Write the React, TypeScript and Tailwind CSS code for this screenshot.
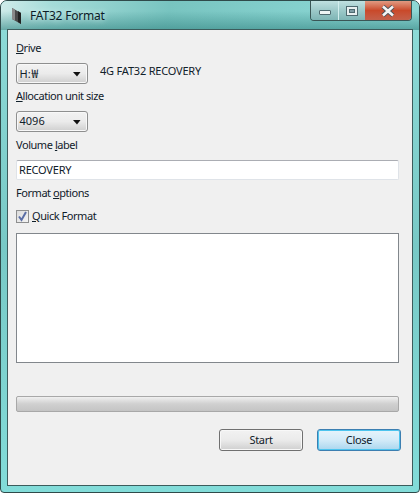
import React from "react";

function Combo({ children }: { children: React.ReactNode }) {
  return (
    <div className="w-[72px] h-[21px] rounded-[3px] border border-[#8e8f8f] bg-gradient-to-b from-[#f2f2f2] via-[#ebebeb] to-[#cfcfcf] flex items-center pl-[2.5px] pr-[5px] justify-between shadow-[inset_0_0_0_1px_#f8f8f8]">
      <span>{children}</span>
      <svg width="9" height="5" viewBox="0 0 9 5" className="mt-[1px]"><path d="M0 0h7.5L4 4.5z" fill="#111" /></svg>
    </div>
  );
}

function Label({ children, h }: { children: React.ReactNode; h: string }) {
  return <div className={`${h} flex items-center tracking-[-0.45px]`}>{children}</div>;
}

export default function App() {
  return (
    <div className="relative w-[420px] h-[493px] overflow-hidden rounded-t-[7px] rounded-b-[4px] border border-[#2f4a4a] bg-gradient-to-b from-[#8fdcd9] via-[#78c9c6] to-[#82dcd9] text-[11px] text-[#10202a] font-['Noto_Sans','Noto_Sans_CJK_KR',sans-serif] px-[6px] pb-[6px] flex flex-col">
      <div className="absolute inset-x-0 top-0 h-[29px] bg-[linear-gradient(100deg,#d0ecea_0%,#a5dcd9_12%,#78c4c0_40%,#84d0cd_70%,#8fd8d5_100%)]" />
      <div className="absolute inset-x-0 top-[10px] h-[19px] bg-gradient-to-b from-transparent to-[#3f8f8c]/70" />
      <div className="relative h-[28px] shrink-0 flex items-start">
        <svg width="12" height="18" viewBox="0 0 12 18" className="ml-[4px] mt-[6px]">
          <path d="M1 1l9 5v11L1 12z" fill="#4a4a4a" />
          <path d="M1 1l3 1.5v11L1 12z" fill="#8a8a8a" />
          <path d="M7 4l3 2v11l-3-2z" fill="#222" />
        </svg>
        <span className="ml-[7px] mt-[6px] text-[12px] leading-[18px] tracking-[-0.2px] text-[#0c1c28] [text-shadow:0_0_6px_#e8fbfa]">FAT32 Format</span>
      </div>

      <div className="absolute right-[7px] top-0 h-[20px] flex rounded-b-[4px] border border-t-0 border-[#3a5656] overflow-hidden">
        <div className="w-[28px] border-r border-[#d2eeee] bg-gradient-to-b from-[#bfe0e0] via-[#9cc9c9] to-[#7eb5b5] flex items-center justify-center">
          <div className="w-[12px] h-[5px] mt-[4px] rounded-[1px] bg-[#eef5f5] border border-[#4e6a70]" />
        </div>
        <div className="w-[26px] bg-gradient-to-b from-[#bfe0e0] via-[#9cc9c9] to-[#7eb5b5] flex items-center justify-center">
          <div className="w-[12px] h-[10px] border border-[#4e6a70] bg-[#e8f0f0] p-[2px]"><div className="w-full h-full bg-[#7f9ea5] border border-[#4e6a70]" /></div>
        </div>
        <div className="w-[46px] bg-gradient-to-b from-[#e09a82] via-[#c9492a] to-[#c4604a] flex items-center justify-center">
          <svg width="16" height="12" viewBox="0 0 16 12"><path d="M3 1.5l10 9M13 1.5l-10 9" stroke="#48525a" strokeWidth="4.4" /><path d="M3 1.5l10 9M13 1.5l-10 9" stroke="#f4f4f4" strokeWidth="2.6" /></svg>
        </div>
      </div>

      <div className="relative flex-1 border border-[#3c5c5c] bg-[#f0f0f0] px-[8px] pt-[9px] flex flex-col">
        <Label h="h-[18px]"><span><u>D</u>rive</span></Label>
        <div className="mt-[6px] flex items-start">
          <Combo>H:<span className="ml-[1px] text-[12px] font-['Noto_Sans_CJK_KR',sans-serif]">₩</span></Combo>
          <span className="ml-[12px] tracking-[-0.2px]">4G FAT32 RECOVERY</span>
        </div>
        <Label h="h-[18px] mt-[3px]"><span><u>A</u>llocation unit size</span></Label>
        <div className="mt-[6px]"><Combo>4096</Combo></div>
        <Label h="h-[18px] mt-[4px]"><span>Volume <u>l</u>abel</span></Label>
        <div className="mt-[6px] h-[20px] w-[383px] rounded-[2px] border border-[#dfe3e8] border-t-[#abadb3] bg-white flex items-center pl-[2px] tracking-[-0.2px]">RECOVERY</div>
        <Label h="h-[18px] mt-[4px]"><span>Format <u>o</u>ptions</span></Label>
        <div className="mt-[6px] h-[16px] flex items-center">
          <div className="w-[13px] h-[13px] border border-[#8e8f8f] bg-gradient-to-br from-[#dcdcdc] to-[#f4f4f4] flex items-center justify-center">
            <svg width="11" height="11" viewBox="0 0 11 11"><path d="M2 5.5l2.5 3.5 4.5-8" fill="none" stroke="#5a6ea6" strokeWidth="2" /></svg>
          </div>
          <span className="ml-[3px] tracking-[-0.45px]"><u>Q</u>uick Format</span>
        </div>
        <div className="mt-[9px] h-[130px] w-[383px] border border-[#82878c] bg-white" />
        <div className="mt-[33px] h-[16px] w-[383px] rounded-[2px] border border-[#a8a8a8] bg-gradient-to-b from-[#f0f0f0] via-[#d0d0d0] to-[#c4c4c4]" />
        <div className="mt-[17px] w-[385px] flex justify-end gap-[14px] tracking-[-0.3px]">
          <button className="w-[84px] h-[22px] rounded-[3px] border border-[#707070] bg-gradient-to-b from-[#f2f2f2] via-[#ebebeb] to-[#cfcfcf] shadow-[inset_0_0_0_1px_#f8f8f8]">Start</button>
          <button className="w-[84px] h-[22px] rounded-[3px] border border-[#3c7fb1] bg-gradient-to-b from-[#e6f4fb] via-[#d3ebf8] to-[#a9d6ee] shadow-[inset_0_0_0_1px_#4cc4ee]">Close</button>
        </div>
      </div>
    </div>
  );
}
